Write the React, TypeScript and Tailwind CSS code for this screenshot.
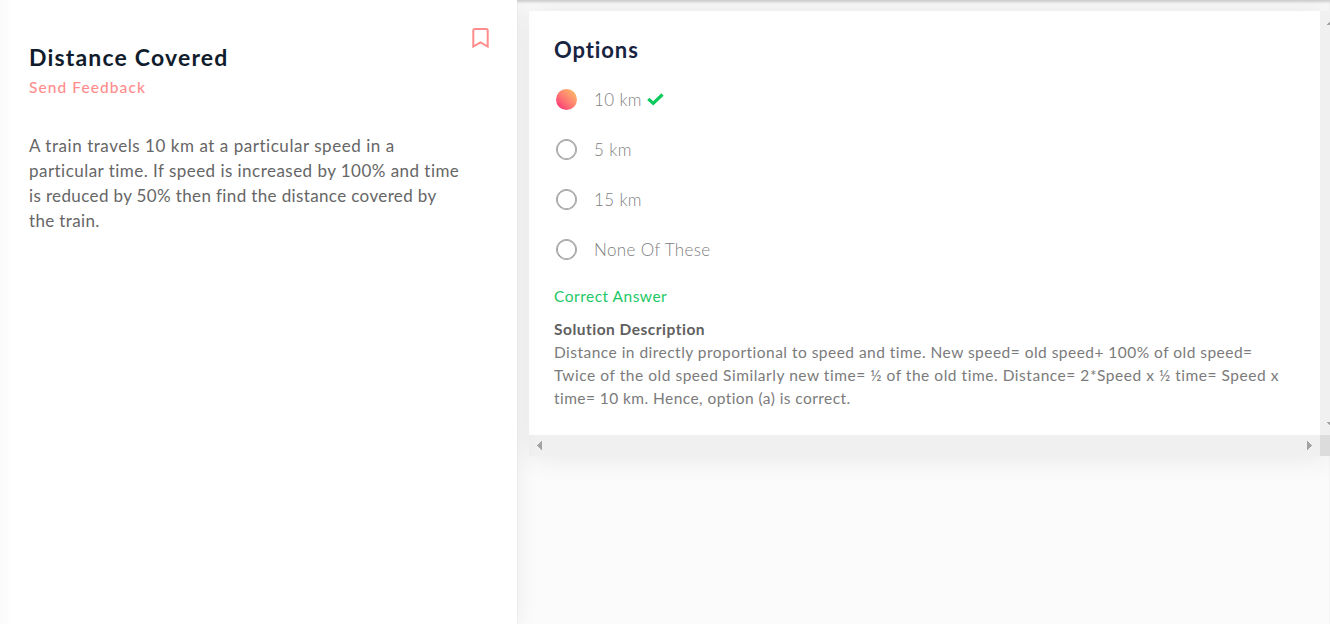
type Line = { text: string; spacing: string };

const question: Line[] = [
  { text: "A train travels 10 km at a particular speed in a", spacing: "tracking-[0.54px]" },
  { text: "particular time. If speed is increased by 100% and time", spacing: "tracking-[0.465px]" },
  { text: "is reduced by 50% then find the distance covered by", spacing: "tracking-[0.37px]" },
  { text: "the train.", spacing: "tracking-[0.35px]" },
];

const options = [
  { text: "10 km", correct: true },
  { text: "5 km", correct: false },
  { text: "15 km", correct: false },
  { text: "None Of These", correct: false },
];

const solution: Line[] = [
  {
    text: "Distance in directly proportional to speed and time. New speed= old speed+ 100% of old speed=",
    spacing: "tracking-[0.475px]",
  },
  {
    text: "Twice of the old speed Similarly new time= ½ of the old time. Distance= 2*Speed x ½ time= Speed x",
    spacing: "tracking-[0.535px]",
  },
  { text: "time= 10 km. Hence, option (a) is correct.", spacing: "tracking-[0.435px]" },
];

function BookmarkIcon() {
  return (
    <svg width="17" height="21" viewBox="0 0 17 21" fill="none" stroke="#ff8d8d" strokeWidth="2">
      <path d="M1.3 18.6V2.5Q1.3 1 2.8 1H14.2Q15.7 1 15.7 2.5V18.6L8.5 14.4Z" />
    </svg>
  );
}

function CheckIcon() {
  return (
    <svg width="17" height="13" viewBox="0 0 17 13" fill="none" stroke="#0bc95b" strokeWidth="3.2">
      <path d="M1.3 5.9L6.2 10.4L15.5 1.5" />
    </svg>
  );
}

function ScrollArrow({ points, width, height }: { points: string; width: number; height: number }) {
  return (
    <svg width={width} height={height} fill="#a3a3a3" shapeRendering="crispEdges">
      <polygon points={points} />
    </svg>
  );
}

function Lines({ lines }: { lines: Line[] }) {
  return (
    <>
      {lines.map((line) => (
        <span key={line.text} className={"block " + line.spacing}>
          {line.text}
        </span>
      ))}
    </>
  );
}

export default function App() {
  return (
    <div className="flex h-[624px] w-full overflow-hidden bg-[#fbfbfb] font-['Lato','Open_Sans',sans-serif] whitespace-nowrap">
      <section className="z-10 flex w-[517px] shrink-0 items-start justify-between bg-white bg-linear-to-r from-[#fbfbfb] to-white to-[14px] pr-7 pl-[29px] shadow-[0_0_22px_rgba(0,0,0,0.07)]">
        <div>
          <h1 className="mt-[42px] text-[23px] leading-[30px] font-bold tracking-[1.18px] text-[#101c2c]">Distance Covered</h1>
          <p className="mt-[5px] text-[15.5px] leading-5 font-medium tracking-[1.08px] text-[#ff8d8d]">Send Feedback</p>
          <p className="mt-[36px] text-[17px] leading-[25px] text-[#666]">
            <Lines lines={question} />
          </p>
        </div>
        <div className="mt-7">
          <BookmarkIcon />
        </div>
      </section>

      <main className="flex min-w-0 flex-1 flex-col shadow-[inset_0_3px_3px_-1px_rgba(0,0,0,0.18)]">
        <div className="mt-[11px] ml-3 shadow-[0_0_28px_rgba(0,0,0,0.09)]">
          <div className="flex h-[424px]">
            <div className="w-[791px] shrink-0 bg-white pl-[25px]">
              <h2 className="mt-6 text-[22px] leading-[30px] font-bold tracking-[0.9px] text-[#18233f]">Options</h2>
              <ul className="mt-[10px]">
                {options.map((option) => (
                  <li key={option.text} className="flex h-[50px] items-center pl-0.5">
                    {option.correct ? (
                      <span className="mb-px size-[21px] rounded-full bg-linear-to-tr from-[#fb3c76] from-15% to-[#fab765] to-90%" />
                    ) : (
                      <span className="mb-px size-[21px] rounded-full border-[1.5px] border-[#999] shadow-[inset_0_0_0_0.8px_#999]" />
                    )}
                    <span className="mb-[2px] ml-[17px] text-[17px] leading-[25px] font-light tracking-[0.36px] text-[#808080]">{option.text}</span>
                    {option.correct && (
                      <span className="mb-px ml-[5px]">
                        <CheckIcon />
                      </span>
                    )}
                  </li>
                ))}
              </ul>
              <p className="mt-[10px] text-[15.5px] leading-[23px] tracking-[0.5px] text-[#1dc765]">Correct Answer</p>
              <p className="mt-[10px] text-[15.5px] leading-[23px] font-bold tracking-[0.5px] text-[#606060]">Solution Description</p>
              <p className="text-[15.5px] leading-[23px] text-[#7b7b7b]">
                <Lines lines={solution} />
              </p>
            </div>
            <div className="flex w-[10px] shrink-0 flex-col items-end justify-between bg-[#f0f0f0] pt-[10px] pb-[9px]">
              <ScrollArrow width={4} height={4} points="0,4 4,0 4,4" />
              <ScrollArrow width={4} height={4} points="0,0 4,0 4,4" />
            </div>
          </div>
          <div className="flex h-[21px]">
            <div className="flex w-[791px] shrink-0 items-center justify-between bg-[#f0f0f0] pr-2 pl-2">
              <ScrollArrow width={5} height={9} points="0,4.5 5,0 5,9" />
              <ScrollArrow width={5} height={9} points="0,0 5,4.5 0,9" />
            </div>
            <div className="w-[10px] shrink-0 bg-[#dcdcdc]" />
          </div>
        </div>
      </main>
    </div>
  );
}
